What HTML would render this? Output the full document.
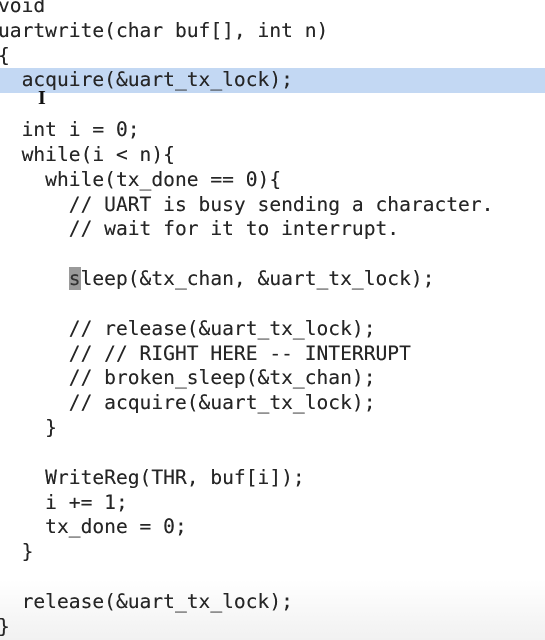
<!DOCTYPE html>
<html><head><meta charset="utf-8"><style>
html,body{margin:0;padding:0;width:545px;height:640px;overflow:hidden;background:#fff;}
body{background:linear-gradient(#fff 0,#fff 580px,#f1f1f1 640px);position:relative;}
.hl{position:absolute;left:0;top:68px;width:545px;height:25px;background:#c3d8f3;}
pre{position:absolute;left:-2px;top:-6px;margin:0;font-family:"DejaVu Sans Mono","Liberation Mono",monospace;font-size:19.6px;line-height:24.83px;color:#262626;text-shadow:0 0 0.3px #262626;}
.c{background:#9a9a9a;color:#333;}
.cur{position:absolute;left:38px;top:87px;font-family:"Liberation Serif",serif;font-weight:bold;font-size:20px;color:#111;}
</style></head><body>
<div class="hl"></div>
<pre>void
uartwrite(char buf[], int n)
{
  acquire(&amp;uart_tx_lock);

  int i = 0;
  while(i &lt; n){
    while(tx_done == 0){
      // UART is busy sending a character.
      // wait for it to interrupt.

      <span class="c">s</span>leep(&amp;tx_chan, &amp;uart_tx_lock);

      // release(&amp;uart_tx_lock);
      // // RIGHT HERE -- INTERRUPT
      // broken_sleep(&amp;tx_chan);
      // acquire(&amp;uart_tx_lock);
    }

    WriteReg(THR, buf[i]);
    i += 1;
    tx_done = 0;
  }

  release(&amp;uart_tx_lock);
}</pre>
<div class="cur">I</div>
</body></html>
